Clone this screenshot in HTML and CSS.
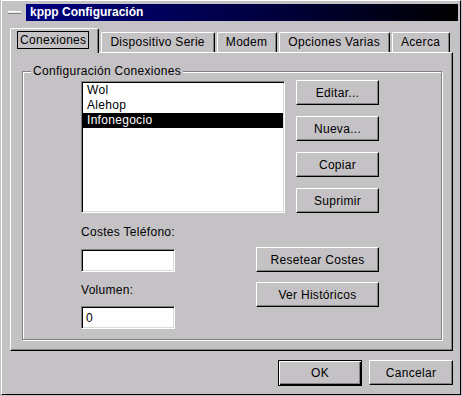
FILE: index.html
```html
<!DOCTYPE html>
<html lang="es">
<head>
    <meta charset="UTF-8">
    <meta name="viewport" content="width=device-width, initial-scale=1.0">
    <title>kppp Configuración</title>
    <link rel="stylesheet" href="styles.css">
</head>
<body>
    <div class="window">
        <div class="title-row">
            <span class="menu-btn"></span>
            <div class="titlebar">kppp Configuración</div>
        </div>
        <div class="dialog">
            <div class="tabs">
                <div class="tab active"><span class="focus">Conexiones</span></div>
                <div class="tab">Dispositivo Serie</div>
                <div class="tab">Modem</div>
                <div class="tab">Opciones Varias</div>
                <div class="tab">Acerca</div>
            </div>
            <div class="panel">
                <fieldset class="group">
                    <legend>Configuración Conexiones</legend>
                    <div class="group-body">
                        <div class="top-row">
                            <ul class="listbox">
                                <li>Wol</li>
                                <li>Alehop</li>
                                <li class="selected">Infonegocio</li>
                            </ul>
                            <div class="side-buttons">
                                <button class="btn">Editar...</button>
                                <button class="btn">Nueva...</button>
                                <button class="btn">Copiar</button>
                                <button class="btn">Suprimir</button>
                            </div>
                        </div>
                        <div class="bottom-row">
                            <div class="fields">
                                <label class="lbl">Costes Teléfono:</label>
                                <input class="field" type="text" value="">
                                <label class="lbl second">Volumen:</label>
                                <input class="field second" type="text" value="0">
                            </div>
                            <div class="cost-buttons">
                                <button class="btn wide">Resetear Costes</button>
                                <button class="btn wide">Ver Históricos</button>
                            </div>
                        </div>
                    </div>
                </fieldset>
            </div>
            <div class="actions">
                <button class="btn action default">OK</button>
                <button class="btn action">Cancelar</button>
            </div>
        </div>
    </div>
</body>
</html>
```

FILE: styles.css
```css
body { margin: 0; background: #c5c2c5; font-family: "Liberation Sans", Arial, sans-serif; font-size: 12px; letter-spacing: 0.3px; color: #000; }
.window { box-sizing: border-box; width: 460px; height: 395px; margin-left: 1px; border: 1px solid; border-color: #fff #000 #000 #fff; }

.title-row { display: flex; align-items: center; padding: 3px 0 0 6px; }
.menu-btn { width: 13px; height: 1px; margin-right: 5px; border-top: 1px solid #fff; border-bottom: 1px solid #838183; background: #e6e4e6; }
.titlebar { flex: 1; height: 17px; line-height: 17px; margin-right: 2px; padding-left: 4px; color: #fff; font-weight: bold; letter-spacing: 0; background: linear-gradient(to right, #000080, #00003a 60%, #000); }

.dialog { padding: 0 7px 0 8px; }
.tabs { display: flex; align-items: flex-end; height: 22px; margin-top: 9px; }
.tab { height: 19px; line-height: 18px; padding: 0 9px 0 8px; margin-left: 2px; border-top: 1px solid #fff; border-left: 1px solid #fff; border-right: 1px solid #000; border-radius: 2px 2px 0 0; box-shadow: inset -1px 0 #838183; }
.tab.active { position: relative; z-index: 1; height: 22px; margin: 0 0 -1px 0; padding: 2px 9px 0 6px; background: #c5c2c5; }
.focus { display: inline-block; height: 16px; line-height: 16px; padding: 0 2px 0 2px; border: 1px solid #000; }

.panel { border: 1px solid; border-color: #fff #000 #000 #fff; box-shadow: inset -1px -1px #838183; padding-bottom: 10px; }
.group { margin: 11px 10px 0 11px; padding: 0; border: 1px solid #838183; box-shadow: inset 1px 1px #fff, 1px 1px #fff; }
.group legend { margin-left: 8px; padding: 0 2px; line-height: 14px; background: #c5c2c5; }
.group-body { padding: 2px 0 10px 58px; }

.top-row { display: flex; align-items: flex-start; }
.listbox { box-sizing: border-box; width: 204px; height: 132px; margin: 1px 0 0; padding: 1px 0 0; list-style: none; background: #fff; border: 1px solid; border-color: #838183 #fff #fff #838183; box-shadow: inset 1px 1px #000, inset -1px -1px #dcdcdc; }
.listbox li { line-height: 15px; padding-left: 4px; margin-left: 1px; margin-right: 1px; }
.listbox li.selected { background: #000; color: #fff; }
.side-buttons { display: flex; flex-direction: column; gap: 11px; margin-left: 11px; }

.btn { box-sizing: border-box; width: 83px; height: 25px; padding: 0; font: inherit; letter-spacing: inherit; color: #000; background: #c5c2c5; border: 1px solid; border-color: #fff #000 #000 #fff; box-shadow: inset -1px -1px #838183; }
.btn.wide { width: 123px; }

.bottom-row { display: flex; }
.fields { display: flex; flex-direction: column; width: 94px; }
.lbl { display: block; line-height: 14px; margin-top: 12px; white-space: nowrap; }
.lbl.second { margin-top: 11px; }
.field { box-sizing: border-box; width: 94px; height: 23px; margin-top: 10px; padding: 0 4px; font: inherit; background: #fff; border: 1px solid; border-color: #838183 #fff #fff #838183; box-shadow: inset 1px 1px #000, inset -1px -1px #dcdcdc; outline: none; }
.field.second { margin-top: 9px; }
.cost-buttons { display: flex; flex-direction: column; gap: 10px; margin: 34px 0 0 81px; }

.actions { display: flex; justify-content: flex-end; gap: 7px; margin-top: 9px; }
.btn.action { width: 84px; height: 25px; }
.btn.default { height: 26px; border: 1px solid #000; box-shadow: inset 1px 1px #fff, inset -1px -1px #000, inset -2px -2px #838183; }
```
